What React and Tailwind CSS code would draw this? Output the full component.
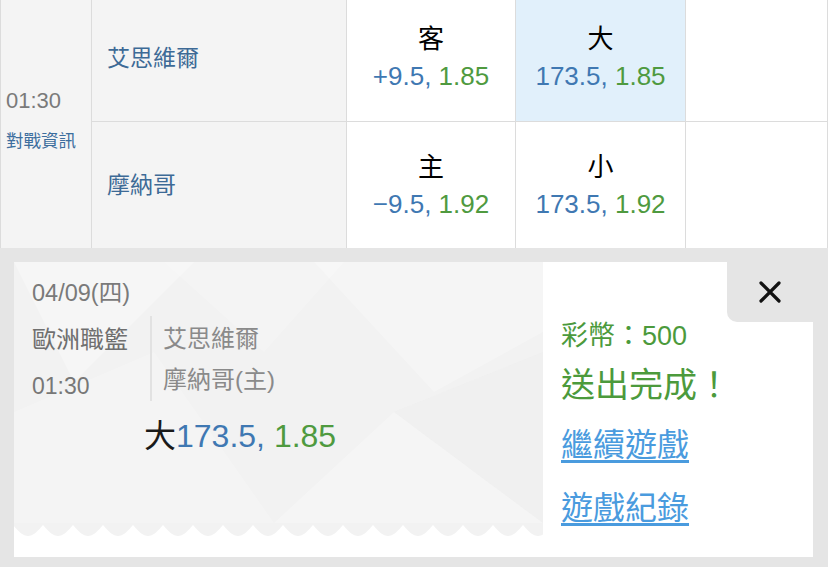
import React from 'react';

const FONT = { fontFamily: '"Liberation Sans", "Noto Sans CJK TC", sans-serif' };

function OddsCell({ label, line, price, active, bottom }) {
  return (
    <div
      className={`flex flex-col items-center justify-center border-r border-[#dcdcdc] ${
        active ? 'bg-[#e1f0fb]' : 'bg-white'
      } ${bottom ? 'pt-[2px]' : 'border-b pb-[6px]'}`}
    >
      <span className="text-[26px] leading-[36px] text-black">{label}</span>
      <span className="text-[26px] leading-[38px]">
        <span className="text-[#3f78b2]">{line}, </span>
        <span className="text-[#4f9a3f]">{price}</span>
      </span>
    </div>
  );
}

function TicketBackground() {
  return (
    <svg className="absolute inset-0 h-full w-full" viewBox="0 0 529 261" preserveAspectRatio="none">
      <polygon points="0,0 180,0 60,120" fill="#ffffff" opacity="0.3" />
      <polygon points="150,0 330,0 250,90" fill="#ffffff" opacity="0.2" />
      <polygon points="300,0 529,0 529,70 420,130" fill="#ffffff" opacity="0.25" />
      <polygon points="0,150 140,90 260,261 0,261" fill="#ffffff" opacity="0.2" />
      <polygon points="260,261 380,150 529,261" fill="#ffffff" opacity="0.25" />
      <polygon points="380,150 529,90 529,261" fill="#ebebeb" opacity="0.3" />
    </svg>
  );
}

function Scallops() {
  return (
    <svg className="block h-[14px] w-full" viewBox="0 0 529 14" preserveAspectRatio="none">
      <defs>
        <pattern id="scallop" x="-1" y="0" width="30" height="14" patternUnits="userSpaceOnUse">
          <path d="M0 0 L30 0 L30 2 C24 9 20 13 15 13 C10 13 6 9 0 2 Z" fill="#f2f2f2" />
        </pattern>
      </defs>
      <rect x="0" y="0" width="529" height="14" fill="url(#scallop)" />
    </svg>
  );
}

export default function App() {
  return (
    <div className="h-[567px] w-[828px] overflow-hidden bg-[#e5e5e5]" style={FONT}>
      {/* Match table */}
      <div className="grid grid-cols-[92px_255px_169px_170px_1fr] grid-rows-[122px_126px] bg-white">
        <div className="row-span-2 flex flex-col border-r border-l border-[#dcdcdc] bg-[#f4f4f4] pl-[5px] pt-[83px]">
          <span className="text-[22px] leading-[36px] text-[#7a7a7a]">01:30</span>
          <span className="mt-[8px] text-[17.5px] leading-[28px] text-[#3d6e9e]">對戰資訊</span>
        </div>
        <div className="flex items-center border-r border-b border-[#dcdcdc] bg-[#f4f4f4] pl-[15px] pb-[4px]">
          <span className="text-[23px] text-[#3d6a96]">艾思維爾</span>
        </div>
        <OddsCell label="客" line="+9.5" price="1.85" />
        <OddsCell label="大" line="173.5" price="1.85" active />
        <div className="border-r border-b border-[#dcdcdc]" />
        <div className="flex items-center border-r border-[#dcdcdc] bg-[#f4f4f4] pl-[15px]">
          <span className="text-[23px] text-[#3d6a96]">摩納哥</span>
        </div>
        <OddsCell label="主" line="−9.5" price="1.92" bottom />
        <OddsCell label="小" line="173.5" price="1.92" bottom />
        <div className="border-r border-[#dcdcdc]" />
      </div>

      {/* Bet slip result */}
      <div className="pl-[14px] pr-[15px] pt-[14px]">
        <div className="flex h-[295px]">
          <div className="flex w-[529px] flex-col">
            <div className="relative flex-1 bg-[#f2f2f2]">
              <TicketBackground />
              <div className="relative pl-[18px] pt-[15px]">
                <div className="text-[23.5px] leading-[32px] text-[#7a7a7a]">04/09(四)</div>
                <div className="mt-[7px] flex">
                  <div className="flex w-[118px] flex-col">
                    <span className="text-[24px] leading-[47px] text-[#6f6f6f]">歐洲職籃</span>
                    <span className="text-[23px] leading-[47px] text-[#777777]">01:30</span>
                  </div>
                  <div className="flex h-[85px] flex-col border-l-2 border-[#e2e2e2] pl-[11px] pt-[2px]">
                    <span className="text-[24px] leading-[41px] text-[#8a8a8a]">艾思維爾</span>
                    <span className="text-[24px] leading-[41px] text-[#8a8a8a]">摩納哥(主)</span>
                  </div>
                </div>
                <div className="ml-[112px] mt-[6px] text-[32px] leading-[40px]">
                  <span className="text-[#1a1a1a]">大</span>
                  <span className="text-[#3f78b2]">173.5, </span>
                  <span className="text-[#4f9a3f]">1.85</span>
                </div>
              </div>
            </div>
            <div className="bg-white">
              <Scallops />
            </div>
            <div className="h-[20px] bg-white" />
          </div>

          <div className="relative flex-1 bg-white pl-[18px] pt-[58px]">
            <button className="absolute right-0 top-0 flex h-[60px] w-[86px] items-center justify-center rounded-bl-[10px] bg-[#e5e5e5]">
              <svg width="24" height="24" viewBox="0 0 24 24">
                <path d="M3 3 L21 21 M21 3 L3 21" stroke="#111" strokeWidth="3.2" strokeLinecap="round" />
              </svg>
            </button>
            <div className="text-[27px] leading-[32px] text-[#4c9a3c]">彩幣：500</div>
            <div className="mt-[11px] text-[34px] leading-[44px] text-[#4c9a3c]">送出完成！</div>
            <div className="mt-[16px] text-[32px] leading-[44px]">
              <a href="#" className="text-[#4a9bde] underline underline-offset-4">繼續遊戲</a>
            </div>
            <div className="mt-[19px] text-[32px] leading-[44px]">
              <a href="#" className="text-[#4a9bde] underline underline-offset-4">遊戲紀錄</a>
            </div>
          </div>
        </div>
      </div>
    </div>
  );
}
